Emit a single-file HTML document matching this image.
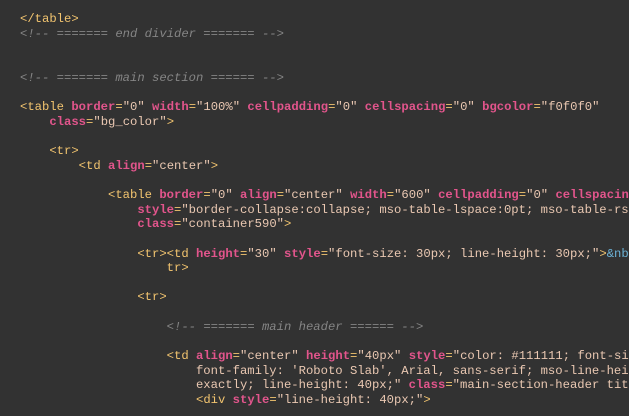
<!DOCTYPE html><html><head><style>
html,body{margin:0;padding:0;background:#323232;width:629px;height:416px;overflow:hidden;position:relative}
pre{margin:0;position:absolute;left:20px;top:12px;width:609px;overflow:hidden;font-family:"Liberation Mono",monospace;font-size:12.22px;line-height:14.65px;color:#e8c6b0;white-space:pre}
.t{color:#f2c46f}.a{color:#e2558c;font-weight:bold}.s{color:#eac8b2}.e{color:#f2c46f}.c{color:#858585;font-style:italic}.n{color:#6cb2d6}
</style></head><body><pre><span class="t">&lt;/table&gt;</span>
<span class="c">&lt;!-- ======= end divider ======= --&gt;</span>


<span class="c">&lt;!-- ======= main section ====== --&gt;</span>

<span class="t">&lt;table</span> <span class="a">border</span><span class="e">=</span><span class="s">"0"</span> <span class="a">width</span><span class="e">=</span><span class="s">"100%"</span> <span class="a">cellpadding</span><span class="e">=</span><span class="s">"0"</span> <span class="a">cellspacing</span><span class="e">=</span><span class="s">"0"</span> <span class="a">bgcolor</span><span class="e">=</span><span class="s">"f0f0f0"</span>
    <span class="a">class</span><span class="e">=</span><span class="s">"bg_color"</span><span class="t">&gt;</span>

    <span class="t">&lt;tr&gt;</span>
        <span class="t">&lt;td</span> <span class="a">align</span><span class="e">=</span><span class="s">"center"</span><span class="t">&gt;</span>

            <span class="t">&lt;table</span> <span class="a">border</span><span class="e">=</span><span class="s">"0"</span> <span class="a">align</span><span class="e">=</span><span class="s">"center"</span> <span class="a">width</span><span class="e">=</span><span class="s">"600"</span> <span class="a">cellpadding</span><span class="e">=</span><span class="s">"0"</span> <span class="a">cellspacing</span><span class="e">=</span><span class="s">"0"</span>
                <span class="a">style</span><span class="e">=</span><span class="s">"border-collapse:collapse; mso-table-lspace:0pt; mso-table-rspace:0pt;"</span>
                <span class="a">class</span><span class="e">=</span><span class="s">"container590"</span><span class="t">&gt;</span>

                <span class="t">&lt;tr&gt;&lt;td</span> <span class="a">height</span><span class="e">=</span><span class="s">"30"</span> <span class="a">style</span><span class="e">=</span><span class="s">"font-size: 30px; line-height: 30px;"</span><span class="t">&gt;</span><span class="n">&amp;nbsp;</span><span class="t">&lt;/td&gt;&lt;/</span>
                    <span class="t">tr&gt;</span>

                <span class="t">&lt;tr&gt;</span>

                    <span class="c">&lt;!-- ======= main header ====== --&gt;</span>

                    <span class="t">&lt;td</span> <span class="a">align</span><span class="e">=</span><span class="s">"center"</span> <span class="a">height</span><span class="e">=</span><span class="s">"40px"</span> <span class="a">style</span><span class="e">=</span><span class="s">"color: #111111; font-size: 28px;</span>
<span class="s">                        font-family: 'Roboto Slab', Arial, sans-serif; mso-line-height-rule:</span>
<span class="s">                        exactly; line-height: 40px;"</span> <span class="a">class</span><span class="e">=</span><span class="s">"main-section-header title"</span><span class="t">&gt;</span>
                        <span class="t">&lt;div</span> <span class="a">style</span><span class="e">=</span><span class="s">"line-height: 40px;"</span><span class="t">&gt;</span>
</pre></body></html>
